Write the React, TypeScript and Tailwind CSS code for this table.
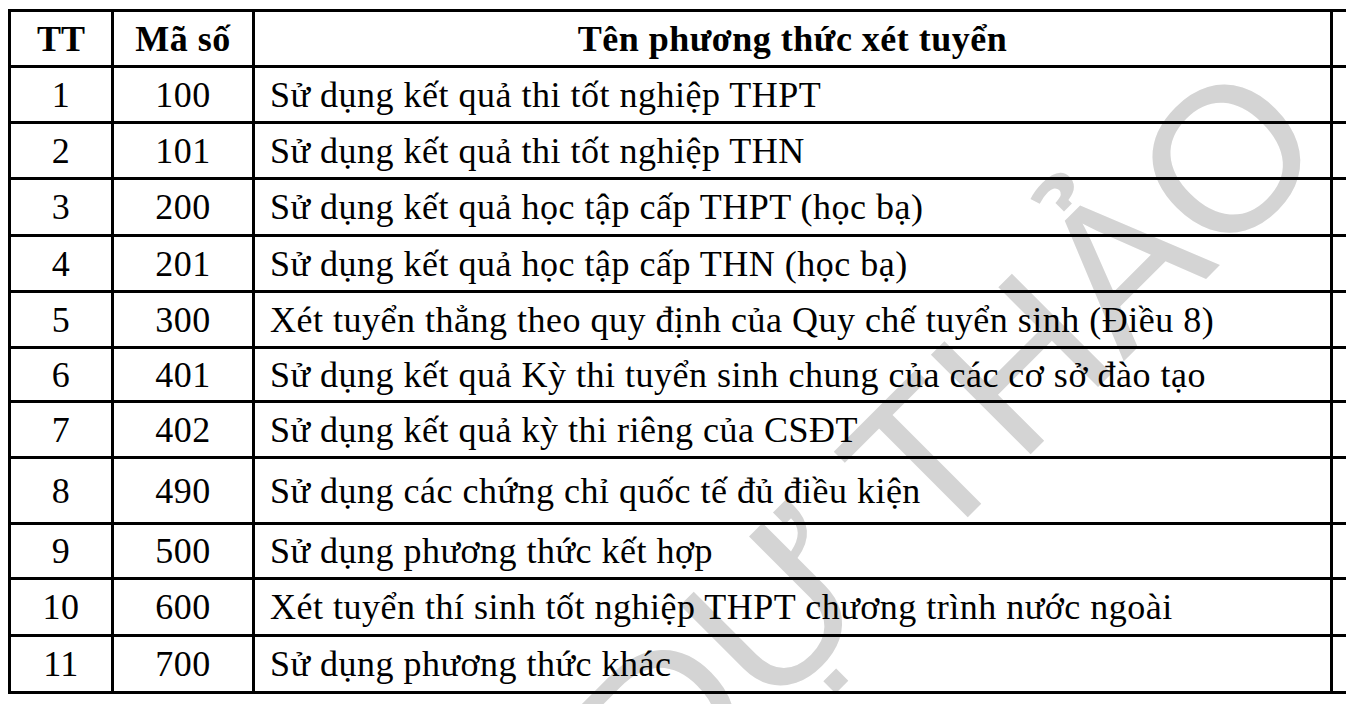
import React from 'react'

const rows: { tt: string; ma: string; ten: string; h: string }[] = [
  { tt: '1', ma: '100', ten: 'Sử dụng kết quả thi tốt nghiệp THPT', h: 'h-[56px]' },
  { tt: '2', ma: '101', ten: 'Sử dụng kết quả thi tốt nghiệp THN', h: 'h-[56px]' },
  { tt: '3', ma: '200', ten: 'Sử dụng kết quả học tập cấp THPT (học bạ)', h: 'h-[57px]' },
  { tt: '4', ma: '201', ten: 'Sử dụng kết quả học tập cấp THN (học bạ)', h: 'h-[56px]' },
  { tt: '5', ma: '300', ten: 'Xét tuyển thẳng theo quy định của Quy chế tuyển sinh (Điều 8)', h: 'h-[56px]' },
  { tt: '6', ma: '401', ten: 'Sử dụng kết quả Kỳ thi tuyển sinh chung của các cơ sở đào tạo', h: 'h-[54px]' },
  { tt: '7', ma: '402', ten: 'Sử dụng kết quả kỳ thi riêng của CSĐT', h: 'h-[56px]' },
  { tt: '8', ma: '490', ten: 'Sử dụng các chứng chỉ quốc tế đủ điều kiện', h: 'h-[66px]' },
  { tt: '9', ma: '500', ten: 'Sử dụng phương thức kết hợp', h: 'h-[55px]' },
  { tt: '10', ma: '600', ten: 'Xét tuyển thí sinh tốt nghiệp THPT chương trình nước ngoài', h: 'h-[57px]' },
  { tt: '11', ma: '700', ten: 'Sử dụng phương thức khác', h: 'h-[57px]' },
]

const cell = 'border-[3px] border-black align-middle p-0'

export default function App() {
  return (
    <div className="relative h-[704px] w-[1346px] overflow-hidden bg-white font-['Liberation_Serif','Times_New_Roman',serif] text-black">
      {/* watermark */}
      <div className="pointer-events-none absolute left-[948px] top-[436px] z-0 -translate-x-1/2 -translate-y-1/2 -rotate-[45deg] whitespace-nowrap font-['Liberation_Sans',Arial,sans-serif] text-[205px] leading-none text-[#d4d4d4]">
        DỰ THẢO
      </div>

      <div className="relative z-10 pl-[8px] pt-[9px]">
        <table className="w-[1522px] table-fixed border-collapse text-[36px] leading-none tracking-[0.5px]">
          <colgroup>
            <col className="w-[103px]" />
            <col className="w-[141px]" />
            <col className="w-[1078px]" />
            <col className="w-[200px]" />
          </colgroup>
          <thead>
            <tr className="h-[56px] font-bold">
              <th className={`${cell} text-center tracking-normal`}>TT</th>
              <th className={`${cell} text-center`}>Mã số</th>
              <th className={`${cell} text-center`}>Tên phương thức xét tuyển</th>
              <th className={cell}></th>
            </tr>
          </thead>
          <tbody>
            {rows.map((r) => (
              <tr key={r.tt} className={r.h}>
                <td className={`${cell} text-center`}>{r.tt}</td>
                <td className={`${cell} text-center`}>{r.ma}</td>
                <td className={`${cell} pl-[15px] text-left`}>{r.ten}</td>
                <td className={cell}></td>
              </tr>
            ))}
          </tbody>
        </table>
      </div>
    </div>
  )
}
